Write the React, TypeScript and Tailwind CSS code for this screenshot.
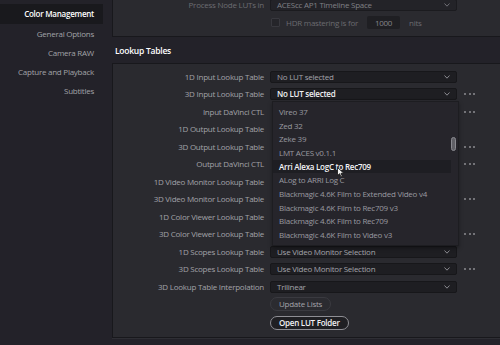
import React from 'react'

const font = { fontFamily: '"Open Sans", "Liberation Sans", sans-serif' }

const sections = ['Color Management', 'General Options', 'Camera RAW', 'Capture and Playback', 'Subtitles']

// rows 2..9 sit under the open menu
const rows = [
  { label: '1D Input Lookup Table', value: 'No LUT selected', dots: false },
  { label: '3D Input Lookup Table', value: 'No LUT selected', dots: true, active: true },
  { label: 'Input DaVinci CTL', value: 'No LUT selected', dots: true, covered: true },
  { label: '1D Output Lookup Table', value: 'No LUT selected', dots: false, covered: true },
  { label: '3D Output Lookup Table', value: 'No LUT selected', dots: true, covered: true },
  { label: 'Output DaVinci CTL', value: 'No LUT selected', dots: true, covered: true },
  { label: '1D Video Monitor Lookup Table', value: 'No LUT selected', dots: false, covered: true },
  { label: '3D Video Monitor Lookup Table', value: 'No LUT selected', dots: true, covered: true },
  { label: '1D Color Viewer Lookup Table', value: 'No LUT selected', dots: false, covered: true },
  { label: '3D Color Viewer Lookup Table', value: 'No LUT selected', dots: true, covered: true },
  { label: '1D Scopes Lookup Table', value: 'Use Video Monitor Selection', dots: false },
  { label: '3D Scopes Lookup Table', value: 'Use Video Monitor Selection', dots: true },
  { label: '3D Lookup Table Interpolation', value: 'Trilinear', dots: false },
]

const lutOptions = [
  'Vireo 37',
  'Zed 32',
  'Zeke 39',
  'LMT ACES v0.1.1',
  'Arri Alexa LogC to Rec709',
  'ALog to ARRI Log C',
  'Blackmagic 4.6K Film to Extended Video v4',
  'Blackmagic 4.6K Film to Rec709 v3',
  'Blackmagic 4.6K Film to Rec709',
  'Blackmagic 4.6K Film to Video v3',
]

function Chevron({ color = '#8a8a90' }: { color?: string }) {
  return (
    <svg width="6" height="4" viewBox="0 0 6 4" className="shrink-0">
      <polyline points="0.5,0.5 3,3.2 5.5,0.5" fill="none" stroke={color} strokeWidth="1" />
    </svg>
  )
}

function Dots() {
  return (
    <div className="ml-[7px] flex gap-[2.5px]">
      <span className="h-[2px] w-[2px] rounded-full bg-[#8c8c92]" />
      <span className="h-[2px] w-[2px] rounded-full bg-[#8c8c92]" />
      <span className="h-[2px] w-[2px] rounded-full bg-[#8c8c92]" />
    </div>
  )
}

function Select({ value, active, covered }: { value: string; active?: boolean; covered?: boolean }) {
  return (
    <div className={`flex h-[12px] w-[187px] items-center justify-between rounded-[2px] border border-[#17171a] bg-[#1e1e22] pl-[6px] pr-[6px] ${covered ? 'invisible' : ''}`}>
      <span className={active ? 'font-semibold text-[#f0f0f2]' : 'text-[#a4a4aa]'}>{value}</span>
      <Chevron />
    </div>
  )
}

export default function App() {
  return (
    <div style={font} className="flex h-[345px] w-[500px] overflow-hidden bg-[#232229] text-[8px] tracking-[-0.25px]">
      {/* sidebar */}
      <div className="w-[112px] shrink-0 pt-[4px]">
        {sections.map((s, i) => (
          <div
            key={s}
            className={
              i === 0
                ? 'flex h-[20px] w-[103px] items-center justify-end bg-[#19191d] pr-[9px] font-semibold text-white'
                : 'flex h-[19.2px] w-[103px] items-center justify-end pr-[9px] text-[#a2a2a8]'
            }
          >
            {s}
          </div>
        ))}
      </div>

      {/* main */}
      <div className="flex flex-1 flex-col">
        {/* color management panel (scrolled) */}
        <div className="h-[37px] border-b border-l border-[#18181c] bg-[#2a2a2f]">
          <div className="-mt-[1px] flex items-center">
            <div className="w-[151px] text-right text-[#6c6c72]">Process Node LUTs in</div>
            <div className="ml-[6px] flex h-[12px] w-[187px] items-center justify-between rounded-[2px] border border-[#1b1b1f] bg-[#232328] pl-[6px] pr-[6px] text-[#808086]">
              <span>ACEScc AP1 Timeline Space</span>
              <Chevron color="#707076" />
            </div>
          </div>
          <div className="mt-[5px] flex h-[13px] items-center pl-[158px] text-[#6a6a70]">
            <span className="h-[9px] w-[9px] rounded-[1px] border border-[#38383e] bg-[#25252a]" />
            <span className="ml-[6px]">HDR mastering is for</span>
            <span className="ml-[9px] flex h-[13px] w-[33px] items-center justify-center rounded-[2px] bg-[#1f1f23] text-[#85858b]">1000</span>
            <span className="ml-[9px]">nits</span>
          </div>
        </div>

        <div className="flex h-[26px] items-end pb-[5px] pl-[3px] text-[8.5px] font-semibold text-white">Lookup Tables</div>

        {/* lookup tables panel */}
        <div className="h-[275px] border-y border-l border-[#18181c] bg-[#2a2a2f] shadow-[0_1px_0_#2e2e34]">
          <div className="relative pt-[4px]">
            {rows.map((r) => (
              <div key={r.label} className="flex h-[17.5px] items-center">
                <div className="w-[151px] text-right text-[#a2a2a8]">{r.label}</div>
                <div className="ml-[6px]">
                  <Select value={r.value} active={r.active} covered={r.covered} />
                </div>
                {r.dots && <Dots />}
              </div>
            ))}

            <div className="mt-[1.5px] flex pl-[157px]">
              <button className="flex h-[14px] items-center rounded-full border border-[#3a3a40] bg-[#2b2b30] px-[8px] text-[#a4a4aa]">
                Update Lists
              </button>
            </div>
            <div className="mt-[5px] flex pl-[157px]">
              <button className="flex h-[14px] items-center rounded-full border border-[#8e8e94] bg-[#1f1f23] px-[8px] font-semibold text-[#f2f2f4]">
                Open LUT Folder
              </button>
            </div>

            {/* open LUT menu */}
            <div className="absolute left-[159px] top-[37px] flex h-[145px] w-[187px] border border-[#1d1d21] bg-[#26252b] shadow-[0_2px_4px_rgba(0,0,0,0.35)]">
              <div className="flex-1 py-[3px]">
                {lutOptions.map((o) => (
                  <div
                    key={o}
                    className={
                      o === 'Arri Alexa LogC to Rec709'
                        ? 'flex h-[13.7px] items-center bg-[#1e1e23] pl-[6px] font-semibold text-[#f4f4f6]'
                        : 'flex h-[13.7px] items-center pl-[6px] text-[#9a9aa0]'
                    }
                  >
                    {o}
                  </div>
                ))}
              </div>
              <div className="w-[7px] pt-[35px]">
                <div className="h-[14px] w-[5px] rounded-full border border-[#8a8a90] bg-[#606066]" />
              </div>
              <svg width="8" height="11" viewBox="0 0 8 11" className="absolute left-[64px] top-[65px]">
                <path d="M0.5 0.5 L0.5 8.5 L2.6 6.7 L4 9.9 L5.3 9.3 L4 6.3 L6.8 6.3 Z" fill="#f2f2f2" stroke="#111" strokeWidth="0.8" />
              </svg>
            </div>
          </div>
        </div>
      </div>
    </div>
  )
}
